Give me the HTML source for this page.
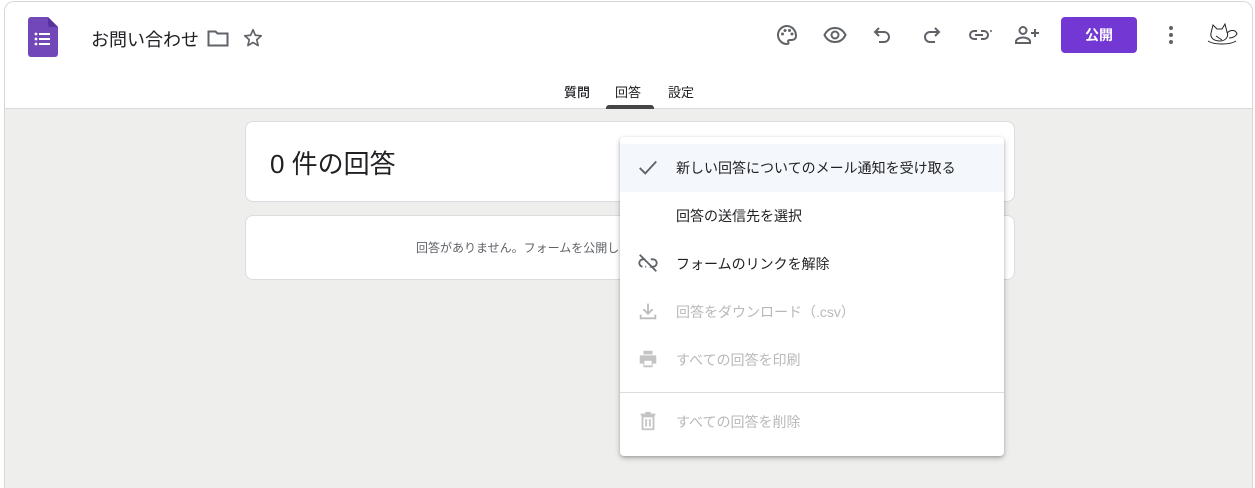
<!DOCTYPE html>
<html><head><meta charset="utf-8"><style>
*{box-sizing:border-box;margin:0;padding:0}
body{width:1255px;height:488px;overflow:hidden;background:#fff;font-family:"Liberation Sans","Noto Sans CJK JP",sans-serif;position:relative}
.frame{position:absolute;left:4px;top:1px;width:1249px;height:487px;border:1px solid #d6d6d6;border-bottom:none;border-radius:10px 10px 0 0;background:#eeeeec;overflow:hidden}
.hdr{position:absolute;left:0;top:0;width:100%;height:107px;background:#fff;border-bottom:1px solid #dadada}
.abs{position:absolute}
.card{position:absolute;background:#fff;border:1px solid #dadce0;border-radius:8px}
.menu{position:absolute;left:620px;top:137px;width:384px;height:319px;background:#fff;border-radius:4px;box-shadow:0 2px 6px rgba(0,0,0,.25),0 1px 2px rgba(0,0,0,.15)}
.it{position:absolute;left:0;width:100%;height:48px;font-size:14px;color:#202124;line-height:48px;padding-left:56px}
.dis{color:#b8b8b8}
.ic{position:absolute;left:17px;top:12px}
</style></head><body>
<div class="frame">
<div class="hdr">
 <svg class="abs" style="left:23px;top:15px" width="30" height="40" viewBox="0 0 30 40"><path d="M3 0h17l10 10v27a3 3 0 0 1-3 3H3a3 3 0 0 1-3-3V3a3 3 0 0 1 3-3z" fill="#7248b9"/><path d="M20 0l10 10H22a2 2 0 0 1-2-2z" fill="#5a32a0"/><g fill="#fff"><circle cx="8" cy="17" r="1.4"/><circle cx="8" cy="22" r="1.4"/><circle cx="8" cy="27" r="1.4"/><rect x="11" y="16" width="11" height="2"/><rect x="11" y="21" width="11" height="2"/><rect x="11" y="26" width="11" height="2"/></g></svg>
 <div class="abs" style="left:86px;top:24px;font-size:18px;color:#202124">お問い合わせ</div>
 <svg class="abs" style="left:202px;top:26px" width="22" height="20" viewBox="0 0 22 20"><path d="M1.5 3.5h7l2 2h10v12h-19z" fill="none" stroke="#5f6368" stroke-width="2"/></svg>
 <svg class="abs" style="left:237px;top:25px" width="22" height="22" viewBox="0 0 24 24"><path d="M12 3l2.6 6 6.4.6-4.9 4.3 1.5 6.3L12 16.9 6.4 20.2l1.5-6.3L3 9.6 9.4 9z" fill="none" stroke="#5f6368" stroke-width="1.8" stroke-linejoin="round"/></svg>
 <svg class="abs" style="left:770px;top:21px" width="24" height="24" viewBox="0 0 24 24"><path d="M12 3a9 9 0 0 0 0 18c1.5 0 2-1 1.3-2-.7-1 0-2 1.3-2H17a4 4 0 0 0 4-4c0-5.5-4-10-9-10z" fill="none" stroke="#5f6368" stroke-width="2"/><circle cx="7.5" cy="11" r="1.5" fill="#5f6368"/><circle cx="10" cy="7.5" r="1.5" fill="#5f6368"/><circle cx="14.5" cy="7.5" r="1.5" fill="#5f6368"/><circle cx="17" cy="11" r="1.5" fill="#5f6368"/></svg>
 <svg class="abs" style="left:818px;top:21px" width="24" height="24" viewBox="0 0 24 24"><path d="M1.5 12C4 7 8 5 12 5s8 2 10.5 7c-2.5 5-6.5 7-10.5 7S4 17 1.5 12z" fill="none" stroke="#5f6368" stroke-width="2"/><circle cx="12" cy="12" r="3.5" fill="none" stroke="#5f6368" stroke-width="2"/></svg>
 <svg class="abs" style="left:866px;top:21px" width="24" height="24" viewBox="0 0 24 24"><path d="M8 5L4 9l4 4M4 9h9a5 5 0 0 1 0 10H8" fill="none" stroke="#5f6368" stroke-width="2"/></svg>
 <svg class="abs" style="left:914px;top:21px" width="24" height="24" viewBox="0 0 24 24"><path d="M16 5l4 4-4 4M20 9h-9a5 5 0 0 0 0 10h5" fill="none" stroke="#5f6368" stroke-width="2"/></svg>
 <svg class="abs" style="left:962px;top:21px" width="26" height="24" viewBox="0 0 26 24"><path d="M10 8H7a4 4 0 0 0 0 8h3M14 8h3a4 4 0 0 1 0 8h-3M8 12h8" fill="none" stroke="#5f6368" stroke-width="2"/><path d="M24 7v2" stroke="#5f6368" stroke-width="1.5"/></svg>
 <svg class="abs" style="left:1009px;top:21px" width="26" height="24" viewBox="0 0 26 24"><circle cx="9" cy="7.5" r="3.5" fill="none" stroke="#5f6368" stroke-width="2"/><path d="M2 20v-1.5c0-2.5 4-4 7-4s7 1.5 7 4V20z" fill="none" stroke="#5f6368" stroke-width="2"/><path d="M21 6v8M17 10h8" stroke="#5f6368" stroke-width="2"/></svg>
 <div class="abs" style="left:1056px;top:15px;width:76px;height:36px;background:#7337d3;border-radius:4px;color:#fff;font-size:14px;font-weight:bold;text-align:center;line-height:36px">公開</div>
 <svg class="abs" style="left:1162px;top:22px" width="8" height="22" viewBox="0 0 8 22"><circle cx="4" cy="4" r="2" fill="#5f6368"/><circle cx="4" cy="11" r="2" fill="#5f6368"/><circle cx="4" cy="18" r="2" fill="#5f6368"/></svg>
 <svg class="abs" style="left:1200px;top:17px" width="34" height="30" viewBox="0 0 34 30"><g fill="none" stroke="#222" stroke-width="1"><path d="M6 14l2-8 4 4h5l3-5 2 8c2 4-1 9-7 9s-10-3-9-8z"/><path d="M22 14c4-4 9-3 10 1-2 3-5 4-8 4"/><path d="M3 22c6 4 22 4 28 0"/><path d="M11 17l6 4"/></g></svg>
 <div class="abs" style="left:559px;top:80px;font-size:13px;color:#202124;font-weight:500">質問</div>
 <div class="abs" style="left:610px;top:80px;font-size:13px;color:#202124">回答</div>
 <div class="abs" style="left:663px;top:80px;font-size:13px;color:#202124">設定</div>
 <div class="abs" style="left:601px;top:103px;width:48px;height:4px;background:#444746;border-radius:3px 3px 0 0"></div>
</div>
<div class="card" style="left:240px;top:119px;width:770px;height:81px"><div class="abs" style="left:24px;top:22px;font-size:26px;color:#202124">0 件の回答</div></div>
<div class="card" style="left:240px;top:213px;width:770px;height:65px"><div class="abs" style="left:170px;top:23px;font-size:12px;color:#5f6368;white-space:nowrap">回答がありません。フォームを公開して回答を受け付けましょう。</div></div>
</div>
<div class="menu">
 <div class="it" style="top:7px;background:#f4f7fc">新しい回答についてのメール通知を受け取る
  <svg class="ic" width="22" height="22" viewBox="0 0 24 24"><path d="M3 13l6 6L21 6" fill="none" stroke="#5f6368" stroke-width="2"/></svg></div>
 <div class="it" style="top:55px">回答の送信先を選択</div>
 <div class="it" style="top:103px">フォームのリンクを解除
  <svg class="ic" width="22" height="22" viewBox="0 0 24 24"><path d="M9 8H7a4 4 0 0 0-1 8M15 8h2a4 4 0 0 1 1 8h-4M10 16H9M3 3l18 18" fill="none" stroke="#5f6368" stroke-width="2"/></svg></div>
 <div class="it dis" style="top:151px">回答をダウンロード（.csv）
  <svg class="ic" width="22" height="22" viewBox="0 0 24 24"><path d="M12 4v11M7 10l5 5 5-5M4 16v4h16v-4" fill="none" stroke="#bdbdbd" stroke-width="2"/></svg></div>
 <div class="it dis" style="top:199px">すべての回答を印刷
  <svg class="ic" width="22" height="22" viewBox="0 0 24 24"><path d="M7 3h10v4H7zM3 8h18v9h-4v4H7v-4H3z" fill="#c4c4c4"/><rect x="8" y="14" width="8" height="5" fill="#fff"/></svg></div>
 <div class="abs" style="left:0;top:255px;width:100%;height:1px;background:#dadce0"></div>
 <div class="it dis" style="top:261px">すべての回答を削除
  <svg class="ic" width="22" height="22" viewBox="0 0 24 24"><path d="M6 7h12v14H6zM4 5h16M9 3h6M10 10v8M14 10v8" fill="none" stroke="#c4c4c4" stroke-width="2"/></svg></div>
</div>
</body></html>
